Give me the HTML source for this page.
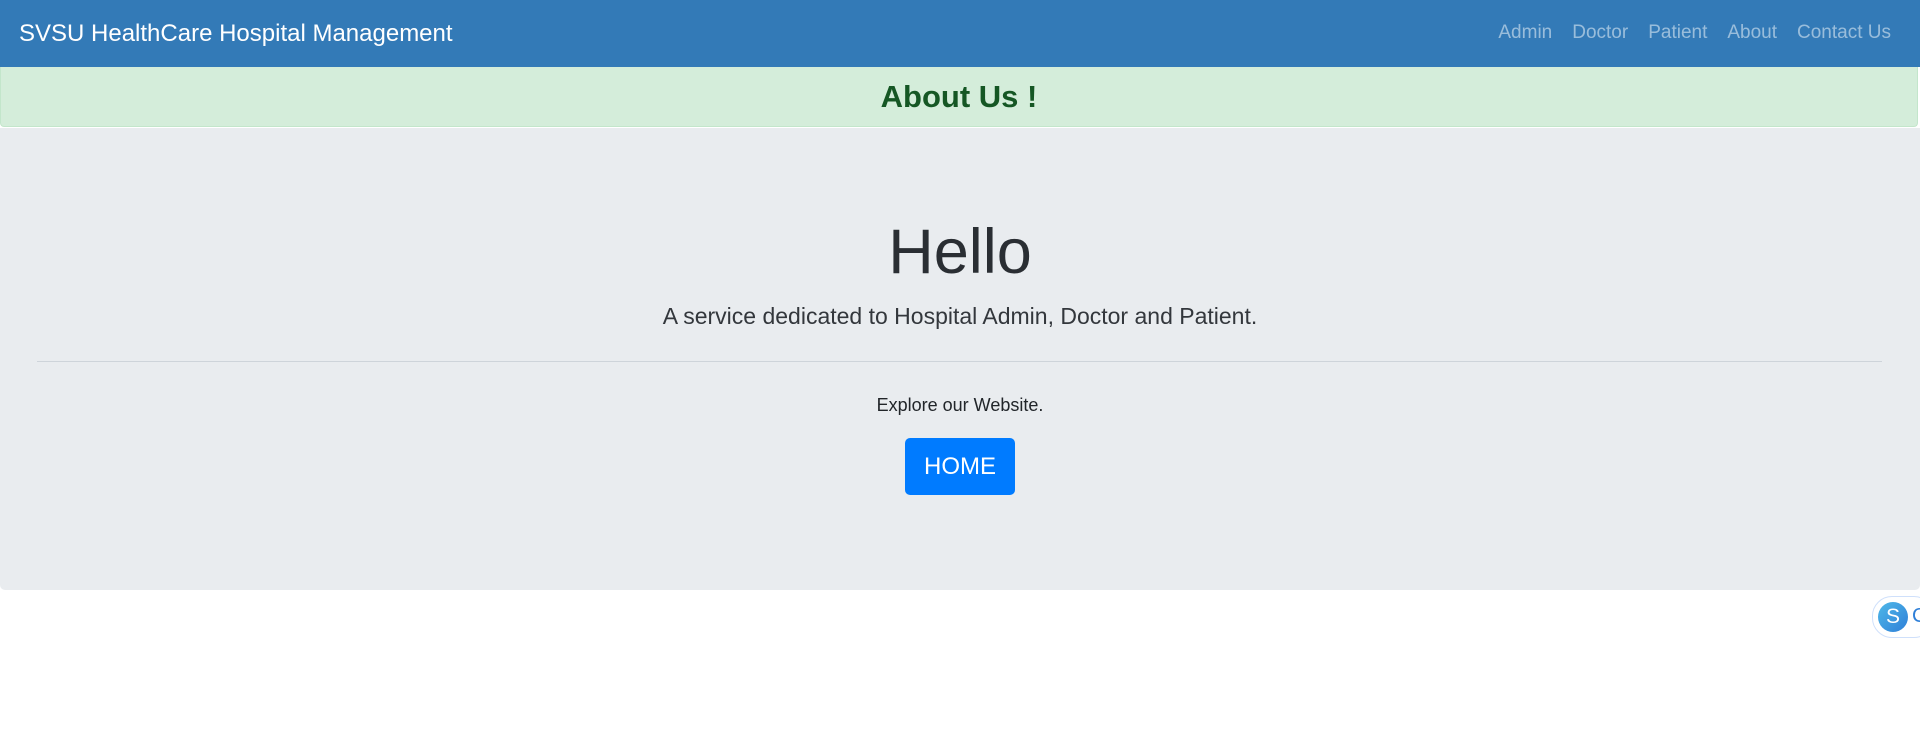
<!DOCTYPE html>
<html><head><meta charset="utf-8"><style>
body{margin:0;width:1920px;height:755px;background:#fff;font-family:"Liberation Sans",sans-serif;position:relative;overflow:hidden}
.nav{position:absolute;left:0;top:0;width:1920px;height:67px;background:#337ab7}
.brand{position:absolute;left:19px;top:19px;color:#fff;font-size:24px;line-height:30px}
.links{position:absolute;right:29px;top:21px;font-size:19px;line-height:24px;color:rgba(255,255,255,.5)}
.links span{margin-left:20px}
.alert{position:absolute;left:0;top:67px;width:1916px;height:59px;background:#d4edda;border:1px solid #c3e6cb;border-top:none;border-radius:0 0 4px 4px;text-align:center}
.alert b{color:#155724;font-size:31px;line-height:59px}
.jumbo{position:absolute;left:0;top:128px;width:1920px;height:462px;background:#e9ecef;border-radius:0 0 5px 5px;text-align:center;color:#212529}
.h{position:absolute;left:0;width:100%;top:84px;font-size:63px;font-weight:300;line-height:80px;color:#2a2e33}
.sub{position:absolute;left:0;width:100%;top:172px;font-size:23px;font-weight:300;line-height:32px;color:#33373c}
.hr{position:absolute;left:37px;width:1845px;top:233px;border-top:1px solid #ced4da}
.ex{position:absolute;left:0;width:100%;top:265px;font-size:18px;line-height:24px}
.btn{position:absolute;left:905px;top:310px;width:110px;height:57px;background:#007bff;border-radius:5px;color:#fff;font-size:24px;line-height:57px}
.sk{position:absolute;left:1872px;top:596px;width:60px;height:40px;border:1px solid #cfe0fb;border-radius:20px;background:#fff}
.sk i{position:absolute;left:5px;top:5px;width:30px;height:30px;border-radius:50%;background:linear-gradient(135deg,#4fb8e8,#2e7fd8);color:#fff;font-style:normal;font-size:21px;line-height:30px;text-align:center}
.sk u{position:absolute;left:39px;top:8px;text-decoration:none;color:#2e7fd8;font-size:20px}
</style></head><body>
<div class="nav"><div class="brand">SVSU HealthCare Hospital Management</div>
<div class="links"><span>Admin</span><span>Doctor</span><span>Patient</span><span>About</span><span>Contact Us</span></div></div>
<div class="alert"><b>About Us !</b></div>
<div class="jumbo">
<div class="h">Hello</div>
<div class="sub">A service dedicated to Hospital Admin, Doctor and Patient.</div>
<div class="hr"></div>
<div class="ex">Explore our Website.</div>
<div class="btn">HOME</div>
</div>
<div class="sk"><i>S</i><u>C</u></div>
</body></html>
